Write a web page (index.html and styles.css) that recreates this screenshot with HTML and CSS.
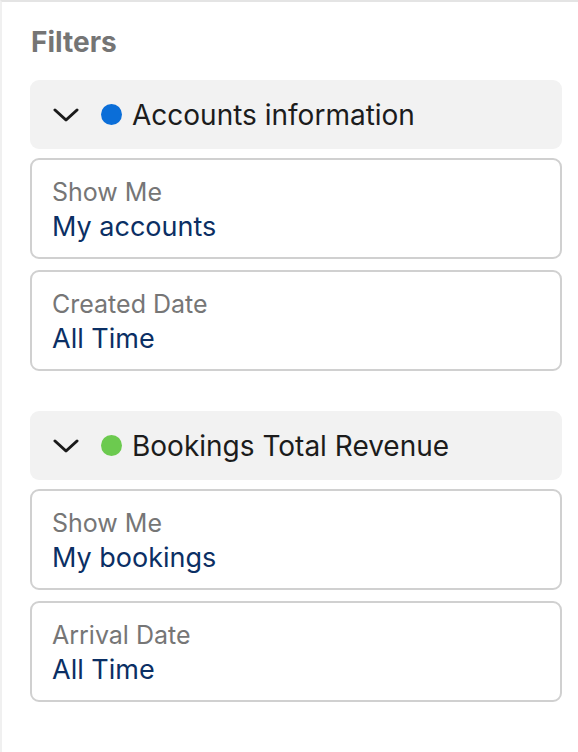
FILE: index.html
```html
<!DOCTYPE html>
<html lang="en">
<head>
  <meta charset="UTF-8" />
  <meta name="viewport" content="width=device-width, initial-scale=1.0"/>
  <title>Filters</title>
  <link rel="stylesheet" href="styles.css">
</head>
<body>
  <div class="panel">
    <h2 class="panel-title">Filters</h2>

    <div class="group">
      <div class="group-header">
        <svg class="chevron" width="26" height="16" viewBox="0 0 26 16">
          <path d="M2 3 L13 13 L24 3" fill="none" stroke="#1a1a1a" stroke-width="3" stroke-linecap="round" stroke-linejoin="round"/>
        </svg>
        <span class="dot dot-blue"></span>
        <span class="group-name">Accounts information</span>
      </div>
      <div class="filter">
        <div class="filter-label">Show Me</div>
        <div class="filter-value">My accounts</div>
      </div>
      <div class="filter">
        <div class="filter-label">Created Date</div>
        <div class="filter-value">All Time</div>
      </div>
    </div>

    <div class="group">
      <div class="group-header">
        <svg class="chevron" width="26" height="16" viewBox="0 0 26 16">
          <path d="M2 3 L13 13 L24 3" fill="none" stroke="#1a1a1a" stroke-width="3" stroke-linecap="round" stroke-linejoin="round"/>
        </svg>
        <span class="dot dot-green"></span>
        <span class="group-name">Bookings Total Revenue</span>
      </div>
      <div class="filter">
        <div class="filter-label">Show Me</div>
        <div class="filter-value">My bookings</div>
      </div>
      <div class="filter">
        <div class="filter-label">Arrival Date</div>
        <div class="filter-value">All Time</div>
      </div>
    </div>
  </div>
</body>
</html>
```

FILE: styles.css
```css
body {
  font-family: Inter, "Liberation Sans", sans-serif;
  background-color: #ffffff;
  margin: 0;
  padding: 0;
}
.panel {
  height: 752px;
  box-sizing: border-box;
  border-top: 2px solid #e4e4e4;
  border-left: 2px solid #f0f0f0;
  padding: 24px 16px 0 28px;
}
.panel-title {
  margin: 0 0 22px 1px;
  font-size: 28px;
  line-height: 32px;
  font-weight: 700;
  color: #757575;
}
.group {
  display: flex;
  flex-direction: column;
  gap: 11px;
  margin-bottom: 40px;
}
.group-header {
  display: flex;
  align-items: center;
  height: 69px;
  padding-left: 23px;
  background-color: #f2f2f2;
  border-radius: 9px;
  margin-bottom: -2px;
}
.chevron {
  display: block;
  margin-right: 22px;
}
.dot {
  width: 21px;
  height: 21px;
  border-radius: 50%;
  margin-right: 10px;
}
.dot-blue {
  background-color: #0b6ed8;
}
.dot-green {
  background-color: #6cca4f;
}
.group-name {
  font-size: 28px;
  color: #1c1c1c;
}
.filter {
  box-sizing: border-box;
  height: 101px;
  border: 2px solid #d0d0d0;
  border-radius: 9px;
  padding: 15px 20px 0;
}
.filter-label {
  font-size: 25px;
  line-height: 34px;
  color: #767676;
}
.filter-value {
  font-size: 27px;
  line-height: 36px;
  color: #0b2f64;
}
```
